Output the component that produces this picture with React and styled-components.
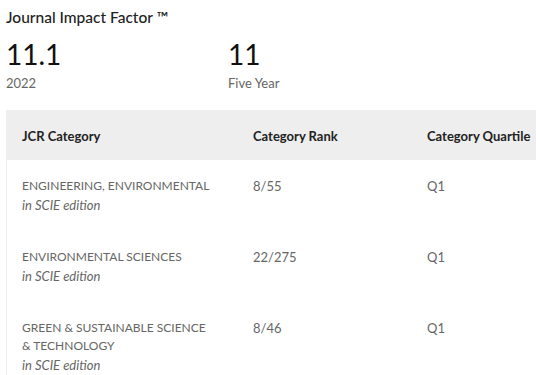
import React from "react";
import styled, { createGlobalStyle } from "styled-components";

const Global = createGlobalStyle`
  html, body { margin: 0; padding: 0; background: #fff; overflow: hidden; }
  body { font-family: Lato, "Liberation Sans", sans-serif; }
`;

const Page = styled.div`
  padding: 6px 0 0 6px;
  width: 530px;
  overflow: hidden;
`;

const Title = styled.h2`
  margin: 0;
  font-size: 15.5px;
  font-weight: 500;
  color: #222;
  line-height: 22px;
`;

const Metrics = styled.div`
  display: grid;
  grid-template-columns: 222px 1fr;
  margin-top: 11px;
`;

const Metric = styled.div`
  display: flex;
  flex-direction: column;
`;

const Value = styled.div`
  font-size: 28px;
  font-weight: 400;
  line-height: 30px;
  color: #111;
`;

const Label = styled.div`
  font-size: 13px;
  line-height: 16px;
  color: #666;
  margin-top: 6px;
`;

const Table = styled.div`
  margin-top: 19px;
  width: 580px;
  border-left: 1px solid #eee;
`;

const Row = styled.div`
  display: grid;
  grid-template-columns: 231px 174px 1fr;
  padding: ${(p) => (p.$head ? "0" : "17px 0 16px")};
  height: ${(p) => (p.$head ? "50px" : "auto")};
  align-items: ${(p) => (p.$head ? "center" : "start")};
  background: ${(p) => (p.$head ? "#eeeeee" : "#fff")};
`;

const HeadCell = styled.div`
  padding-left: 15px;
  padding-top: 2px;
  font-size: 13px;
  font-weight: 700;
  color: #222;
`;

const Cell = styled.div`
  padding-left: 15px;
  padding-right: ${(p) => (p.$wide ? "24px" : "0")};
  font-size: 13px;
  line-height: 18px;
  color: #666;
`;

const Name = styled.div`
  text-transform: uppercase;
  font-size: 12px;
`;

const Edition = styled.div`
  font-style: italic;
  line-height: 20px;
`;

const rows = [
  { name: "ENGINEERING, ENVIRONMENTAL", rank: "8/55", q: "Q1" },
  { name: "ENVIRONMENTAL SCIENCES", rank: "22/275", q: "Q1" },
  { name: "GREEN & SUSTAINABLE SCIENCE & TECHNOLOGY", rank: "8/46", q: "Q1" },
];

export default function App() {
  return (
    <Page>
      <Global />
      <Title>Journal Impact Factor ™</Title>
      <Metrics>
        <Metric>
          <Value>11.1</Value>
          <Label>2022</Label>
        </Metric>
        <Metric>
          <Value>11</Value>
          <Label>Five Year</Label>
        </Metric>
      </Metrics>
      <Table>
        <Row $head>
          <HeadCell>JCR Category</HeadCell>
          <HeadCell>Category Rank</HeadCell>
          <HeadCell>Category Quartile</HeadCell>
        </Row>
        {rows.map((r) => (
          <Row key={r.name}>
            <Cell $wide>
              <Name>{r.name}</Name>
              <Edition>in SCIE edition</Edition>
            </Cell>
            <Cell>{r.rank}</Cell>
            <Cell>{r.q}</Cell>
          </Row>
        ))}
      </Table>
    </Page>
  );
}
